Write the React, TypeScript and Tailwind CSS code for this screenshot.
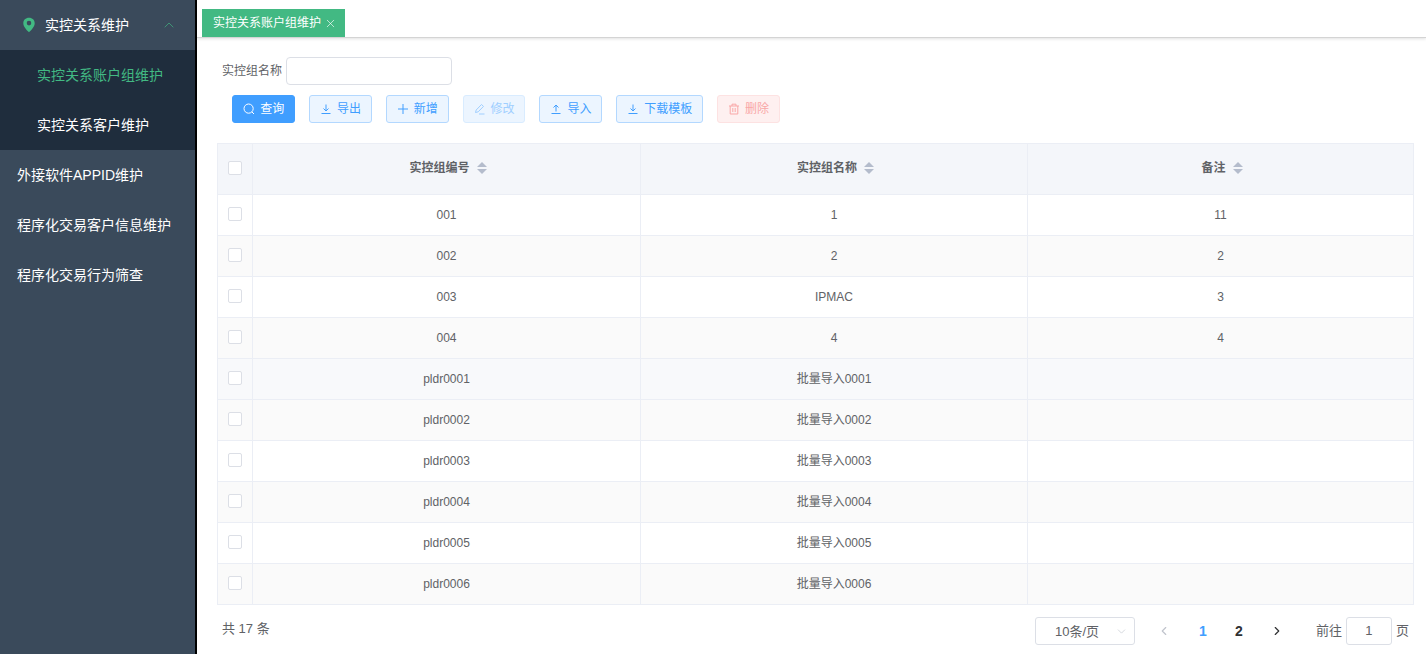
import React from "react";
import { ChevronUp, ChevronDown, ChevronLeft, ChevronRight, X } from "lucide-react";

const font = "font-['Liberation_Sans','Noto_Sans_CJK_SC',sans-serif]";

function Sort() {
  return (
    <span className="inline-flex flex-col gap-[2px] ml-[7px]">
      <span className="w-0 h-0 border-x-[5px] border-x-transparent border-b-[5px] border-b-[#b4bccc]" />
      <span className="w-0 h-0 border-x-[5px] border-x-transparent border-t-[5px] border-t-[#b4bccc]" />
    </span>
  );
}

function Check() {
  return <span className="block w-[14px] h-[14px] bg-white border border-[#dcdfe6] rounded-[2px]" />;
}

function Ico({ d }: { d: string }) {
  return (
    <svg width="12" height="12" viewBox="0 0 12 12" fill="none" stroke="currentColor" strokeWidth="1" className="shrink-0">
      <path d={d} />
    </svg>
  );
}

const icons = {
  search: "M5.6 1a4.6 4.6 0 1 0 0 9.2 4.6 4.6 0 0 0 0-9.2zM8.9 8.9 11 11",
  download: "M6 1.5V8M3.5 5.5 6 8l2.5-2.5M1.5 10.5h9",
  upload: "M6 8.5V2M3.5 4.5 6 2l2.5 2.5M1.5 10.5h9",
  plus: "M6 1v10M1 6h10",
  edit: "M1.5 9.5 2.2 7 7.5 1.5 9.5 3.4 4.2 8.8ZM5 11h5.5",
  trash: "M1 3h10M4 3V1.2h4V3M2.2 3v8h7.6V3M4.8 5v4M7.2 5v4",
};

function Btn({ icon, label, tone }: { icon: string; label: string; tone: "solid" | "plain" | "faded" | "danger" }) {
  const cls = {
    solid: "bg-[#409eff] border-[#409eff] text-white",
    plain: "bg-[#ecf5ff] border-[#b3d8ff] text-[#409eff]",
    faded: "bg-[#ecf5ff] border-[#d9ecff] text-[#a0cfff]",
    danger: "bg-[#fef0f0] border-[#fde2e2] text-[#f9a7a7]",
  }[tone];
  return (
    <button className={`h-[28px] px-[9.9px] border rounded-[3px] text-[12px] flex items-center gap-[5px] ${cls}`}>
      <Ico d={icon} />
      <span>{label}</span>
    </button>
  );
}

const rows: [string, string, string, string][] = [
  ["001", "1", "11", "bg-white"],
  ["002", "2", "2", "bg-[#fafafa]"],
  ["003", "IPMAC", "3", "bg-white"],
  ["004", "4", "4", "bg-[#fafafa]"],
  ["pldr0001", "批量导入0001", "", "bg-[#f8f9fb]"],
  ["pldr0002", "批量导入0002", "", "bg-[#fafafa]"],
  ["pldr0003", "批量导入0003", "", "bg-white"],
  ["pldr0004", "批量导入0004", "", "bg-[#fafafa]"],
  ["pldr0005", "批量导入0005", "", "bg-white"],
  ["pldr0006", "批量导入0006", "", "bg-[#fafafa]"],
];

const cols = "grid grid-cols-[35px_388px_387px_1fr]";

export default function App() {
  return (
    <div className={`${font} flex w-[1426px] h-[654px] overflow-hidden bg-white`}>
      <aside className="w-[197px] shrink-0 bg-[#3a4a5b] border-r-2 border-black text-[14px] text-white">
        <div className="h-[50px] pl-[21px] pr-[18px] flex items-center">
          <svg width="16" height="16" viewBox="0 0 16 16" className="mr-[8px] shrink-0">
            <path fillRule="evenodd" fill="#42b983" d="M8 0.8C4.6 0.8 2.3 3.2 2.3 6.2c0 3.7 4 7.4 5.7 9 1.7-1.6 5.7-5.3 5.7-9C13.7 3.2 11.4 0.8 8 0.8zM8 8.4a2.3 2.3 0 1 1 0-4.6 2.3 2.3 0 0 1 0 4.6z" />
          </svg>
          <span className="flex-1">实控关系维护</span>
          <ChevronUp size={16} strokeWidth={1} className="text-[#42b983]" />
        </div>
        <div className="bg-[#1f2d3d]">
          <div className="h-[50px] pl-[37px] flex items-center text-[#42b983]">实控关系账户组维护</div>
          <div className="h-[50px] pl-[37px] flex items-center">实控关系客户维护</div>
        </div>
        <div className="h-[50px] pl-[17px] flex items-center">外接软件APPID维护</div>
        <div className="h-[50px] pl-[17px] flex items-center">程序化交易客户信息维护</div>
        <div className="h-[50px] pl-[17px] flex items-center">程序化交易行为筛查</div>
      </aside>

      <main className="flex-1 min-w-0 flex flex-col">
        <div className="h-[38px] pl-[5px] pt-[9px] border-b border-[#d4d4d4] shadow-[0_1px_3px_rgba(0,0,0,0.12)] shrink-0">
          <div className="w-[143px] h-[28px] bg-[#42b983] text-white text-[12px] flex items-center pl-[11px]">
            <span>实控关系账户组维护</span>
            <X size={13} strokeWidth={1.2} className="ml-[3px] mt-[1px]" />
          </div>
        </div>

        <div className="pl-[20px] pr-[12px] flex-1 flex flex-col">
          <div className="flex items-center h-[28px] mt-[19px] pl-[5px] text-[12px] text-[#606266]">
            <span className="w-[64px]">实控组名称</span>
            <div className="w-[166px] h-[28px] bg-white border border-[#dcdfe6] rounded-[4px]" />
          </div>

          <div className="flex gap-[14px] mt-[10px] pl-[15.3px]">
            <Btn tone="solid" label="查询" icon={icons.search} />
            <Btn tone="plain" label="导出" icon={icons.download} />
            <Btn tone="plain" label="新增" icon={icons.plus} />
            <Btn tone="faded" label="修改" icon={icons.edit} />
            <Btn tone="plain" label="导入" icon={icons.upload} />
            <Btn tone="plain" label="下载模板" icon={icons.download} />
            <Btn tone="danger" label="删除" icon={icons.trash} />
          </div>

          <div className="mt-[20px] border-t border-l border-[#ebeef5] text-[12px] text-[#606266]">
            <div className={`${cols} h-[51px] bg-[#f4f6fa] font-bold border-b border-[#ebeef5]`}>
              <div className="border-r border-[#ebeef5] flex items-center justify-center pb-[2px]"><Check /></div>
              {["实控组编号", "实控组名称", "备注"].map((h) => (
                <div key={h} className="border-r border-[#ebeef5] flex items-center justify-center pl-[3px] pb-[2px]">
                  <span>{h}</span>
                  <Sort />
                </div>
              ))}
            </div>
            {rows.map(([a, b, c, bg]) => (
              <div key={a} className={`${cols} h-[41px] border-b border-[#ebeef5] ${bg}`}>
                <div className="border-r border-[#ebeef5] flex items-center justify-center pb-[2px]"><Check /></div>
                <div className="border-r border-[#ebeef5] flex items-center justify-center">{a}</div>
                <div className="border-r border-[#ebeef5] flex items-center justify-center">{b}</div>
                <div className="border-r border-[#ebeef5] flex items-center justify-center">{c}</div>
              </div>
            ))}
          </div>

          <div className="flex items-center mt-[12px] h-[28px] text-[13px] text-[#606266]">
            <span className="pl-[5px] pb-[4px]">共 17 条</span>
            <div className="ml-auto flex items-center pr-[5px]">
              <div className="w-[100px] h-[28px] border border-[#dcdfe6] rounded-[3px] flex items-center pl-[19px] pr-[1px]">
                <span className="flex-1 pt-[2px]">10条/页</span>
                <ChevronDown size={13} strokeWidth={1.2} className="text-[#c0c4cc] mr-[5px]" />
              </div>
              <ChevronLeft size={14} strokeWidth={2} className="ml-[22px] text-[#c0c4cc]" />
              <span className="ml-[28px] font-bold text-[14px] text-[#409eff] w-[8px]">1</span>
              <span className="ml-[28px] font-bold text-[14px] text-[#303133] w-[8px]">2</span>
              <ChevronRight size={14} strokeWidth={2} className="ml-[27px] text-[#303133]" />
              <span className="ml-[32px]">前往</span>
              <div className="ml-[4px] w-[46px] h-[28px] border border-[#dcdfe6] rounded-[3px] flex items-center justify-center">1</div>
              <span className="ml-[4px]">页</span>
            </div>
          </div>
        </div>
      </main>
    </div>
  );
}
